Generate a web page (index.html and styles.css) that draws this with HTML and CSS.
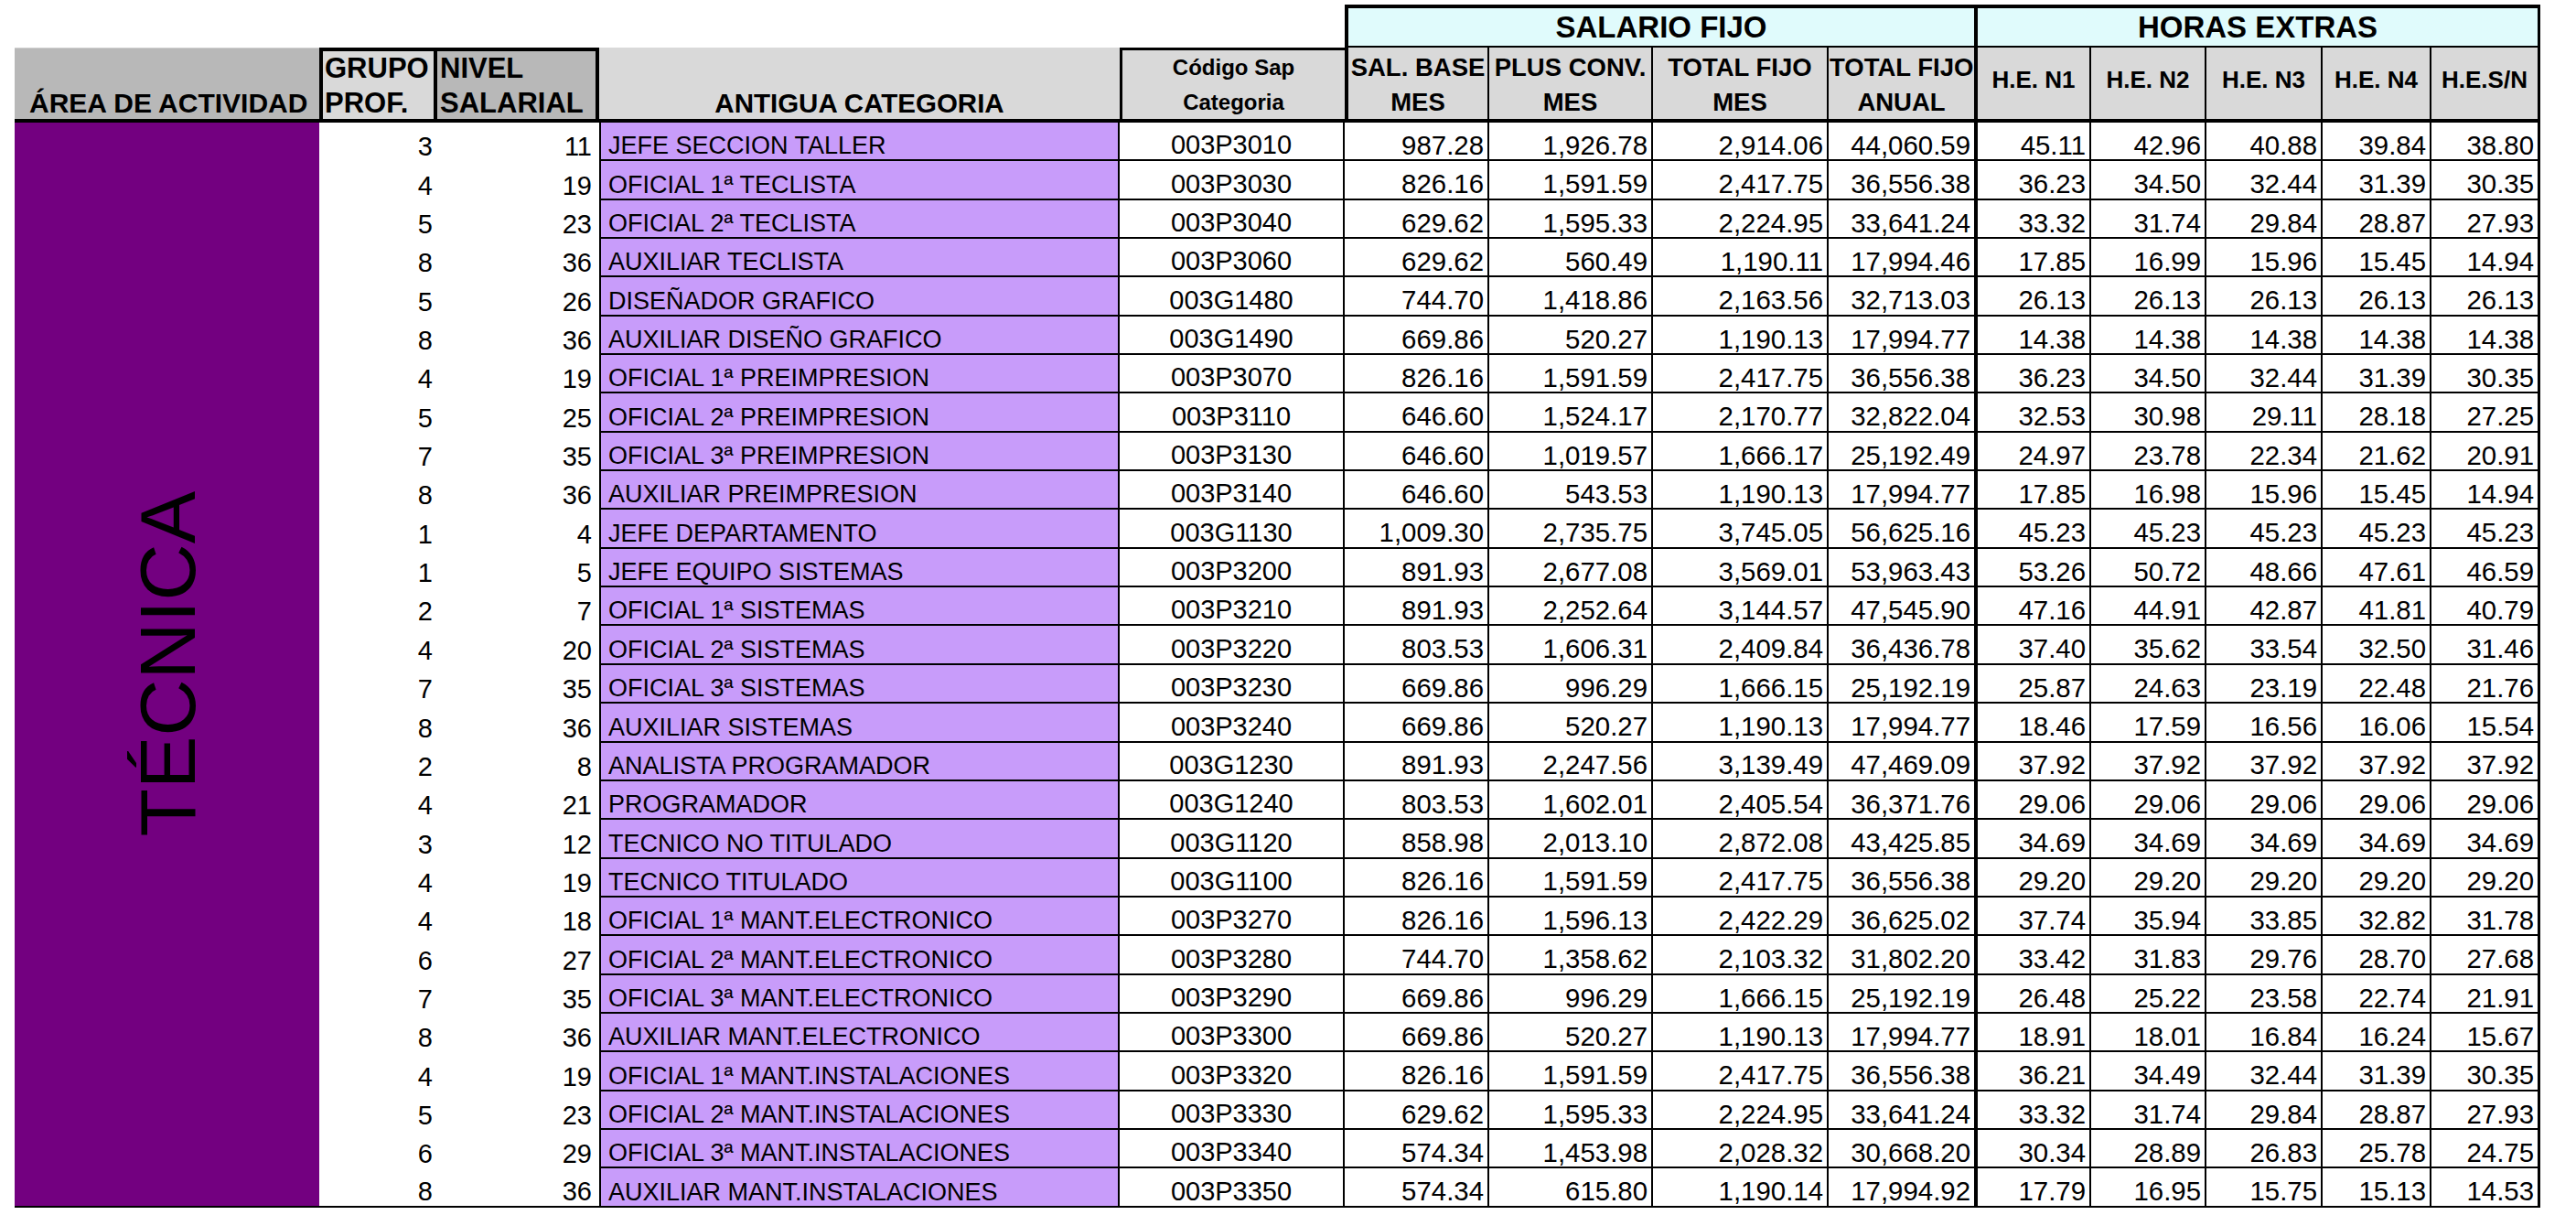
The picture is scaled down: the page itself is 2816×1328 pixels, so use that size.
FILE: index.html
```html
<!DOCTYPE html>
<html lang="es">
<head>
<meta charset="utf-8">
<title>Tabla salarial - Técnica</title>
<link rel="stylesheet" href="styles.css">
</head>
<body>
<div class="sheet">
  <div class="blank"></div>
  <div class="gt sal">SALARIO FIJO</div>
  <div class="gt hor">HORAS EXTRAS</div>

  <div class="h h-area">ÁREA DE ACTIVIDAD</div>
  <div class="h h-grp">GRUPO<br>PROF.</div>
  <div class="h h-niv">NIVEL<br>SALARIAL</div>
  <div class="h h-cat">ANTIGUA CATEGORIA</div>
  <div class="h h-code">Código Sap<br>Categoria</div>
  <div class="h h-m first"><span>SAL. BASE</span><span>MES</span></div>
  <div class="h h-m"><span>PLUS CONV.</span><span>MES</span></div>
  <div class="h h-m"><span>TOTAL FIJO</span><span>MES</span></div>
  <div class="h h-m an"><span class="wide">TOTAL FIJO</span><span>ANUAL</span></div>
  <div class="h h-he">H.E. N1</div>
  <div class="h h-he">H.E. N2</div>
  <div class="h h-he">H.E. N3</div>
  <div class="h h-he">H.E. N4</div>
  <div class="h h-he sn">H.E.S/N</div>

  <div class="area"><span>TÉCNICA</span></div>

  <div class="n">3</div><div class="n v">11</div><div class="cat">JEFE SECCION TALLER</div><div class="code">003P3010</div><div class="d">987.28</div><div class="d">1,926.78</div><div class="d">2,914.06</div><div class="d an">44,060.59</div><div class="d">45.11</div><div class="d">42.96</div><div class="d">40.88</div><div class="d">39.84</div><div class="d sn">38.80</div>
  <div class="n">4</div><div class="n v">19</div><div class="cat">OFICIAL 1ª TECLISTA</div><div class="code">003P3030</div><div class="d">826.16</div><div class="d">1,591.59</div><div class="d">2,417.75</div><div class="d an">36,556.38</div><div class="d">36.23</div><div class="d">34.50</div><div class="d">32.44</div><div class="d">31.39</div><div class="d sn">30.35</div>
  <div class="n">5</div><div class="n v">23</div><div class="cat">OFICIAL 2ª TECLISTA</div><div class="code">003P3040</div><div class="d">629.62</div><div class="d">1,595.33</div><div class="d">2,224.95</div><div class="d an">33,641.24</div><div class="d">33.32</div><div class="d">31.74</div><div class="d">29.84</div><div class="d">28.87</div><div class="d sn">27.93</div>
  <div class="n">8</div><div class="n v">36</div><div class="cat">AUXILIAR TECLISTA</div><div class="code">003P3060</div><div class="d">629.62</div><div class="d">560.49</div><div class="d">1,190.11</div><div class="d an">17,994.46</div><div class="d">17.85</div><div class="d">16.99</div><div class="d">15.96</div><div class="d">15.45</div><div class="d sn">14.94</div>
  <div class="n">5</div><div class="n v">26</div><div class="cat">DISEÑADOR GRAFICO</div><div class="code">003G1480</div><div class="d">744.70</div><div class="d">1,418.86</div><div class="d">2,163.56</div><div class="d an">32,713.03</div><div class="d">26.13</div><div class="d">26.13</div><div class="d">26.13</div><div class="d">26.13</div><div class="d sn">26.13</div>
  <div class="n">8</div><div class="n v">36</div><div class="cat">AUXILIAR DISEÑO GRAFICO</div><div class="code">003G1490</div><div class="d">669.86</div><div class="d">520.27</div><div class="d">1,190.13</div><div class="d an">17,994.77</div><div class="d">14.38</div><div class="d">14.38</div><div class="d">14.38</div><div class="d">14.38</div><div class="d sn">14.38</div>
  <div class="n">4</div><div class="n v">19</div><div class="cat">OFICIAL 1ª PREIMPRESION</div><div class="code">003P3070</div><div class="d">826.16</div><div class="d">1,591.59</div><div class="d">2,417.75</div><div class="d an">36,556.38</div><div class="d">36.23</div><div class="d">34.50</div><div class="d">32.44</div><div class="d">31.39</div><div class="d sn">30.35</div>
  <div class="n">5</div><div class="n v">25</div><div class="cat">OFICIAL 2ª PREIMPRESION</div><div class="code">003P3110</div><div class="d">646.60</div><div class="d">1,524.17</div><div class="d">2,170.77</div><div class="d an">32,822.04</div><div class="d">32.53</div><div class="d">30.98</div><div class="d">29.11</div><div class="d">28.18</div><div class="d sn">27.25</div>
  <div class="n">7</div><div class="n v">35</div><div class="cat">OFICIAL 3ª PREIMPRESION</div><div class="code">003P3130</div><div class="d">646.60</div><div class="d">1,019.57</div><div class="d">1,666.17</div><div class="d an">25,192.49</div><div class="d">24.97</div><div class="d">23.78</div><div class="d">22.34</div><div class="d">21.62</div><div class="d sn">20.91</div>
  <div class="n">8</div><div class="n v">36</div><div class="cat">AUXILIAR PREIMPRESION</div><div class="code">003P3140</div><div class="d">646.60</div><div class="d">543.53</div><div class="d">1,190.13</div><div class="d an">17,994.77</div><div class="d">17.85</div><div class="d">16.98</div><div class="d">15.96</div><div class="d">15.45</div><div class="d sn">14.94</div>
  <div class="n">1</div><div class="n v">4</div><div class="cat">JEFE DEPARTAMENTO</div><div class="code">003G1130</div><div class="d">1,009.30</div><div class="d">2,735.75</div><div class="d">3,745.05</div><div class="d an">56,625.16</div><div class="d">45.23</div><div class="d">45.23</div><div class="d">45.23</div><div class="d">45.23</div><div class="d sn">45.23</div>
  <div class="n">1</div><div class="n v">5</div><div class="cat">JEFE EQUIPO SISTEMAS</div><div class="code">003P3200</div><div class="d">891.93</div><div class="d">2,677.08</div><div class="d">3,569.01</div><div class="d an">53,963.43</div><div class="d">53.26</div><div class="d">50.72</div><div class="d">48.66</div><div class="d">47.61</div><div class="d sn">46.59</div>
  <div class="n">2</div><div class="n v">7</div><div class="cat">OFICIAL 1ª SISTEMAS</div><div class="code">003P3210</div><div class="d">891.93</div><div class="d">2,252.64</div><div class="d">3,144.57</div><div class="d an">47,545.90</div><div class="d">47.16</div><div class="d">44.91</div><div class="d">42.87</div><div class="d">41.81</div><div class="d sn">40.79</div>
  <div class="n">4</div><div class="n v">20</div><div class="cat">OFICIAL 2ª SISTEMAS</div><div class="code">003P3220</div><div class="d">803.53</div><div class="d">1,606.31</div><div class="d">2,409.84</div><div class="d an">36,436.78</div><div class="d">37.40</div><div class="d">35.62</div><div class="d">33.54</div><div class="d">32.50</div><div class="d sn">31.46</div>
  <div class="n">7</div><div class="n v">35</div><div class="cat">OFICIAL 3ª SISTEMAS</div><div class="code">003P3230</div><div class="d">669.86</div><div class="d">996.29</div><div class="d">1,666.15</div><div class="d an">25,192.19</div><div class="d">25.87</div><div class="d">24.63</div><div class="d">23.19</div><div class="d">22.48</div><div class="d sn">21.76</div>
  <div class="n">8</div><div class="n v">36</div><div class="cat">AUXILIAR SISTEMAS</div><div class="code">003P3240</div><div class="d">669.86</div><div class="d">520.27</div><div class="d">1,190.13</div><div class="d an">17,994.77</div><div class="d">18.46</div><div class="d">17.59</div><div class="d">16.56</div><div class="d">16.06</div><div class="d sn">15.54</div>
  <div class="n">2</div><div class="n v">8</div><div class="cat">ANALISTA PROGRAMADOR</div><div class="code">003G1230</div><div class="d">891.93</div><div class="d">2,247.56</div><div class="d">3,139.49</div><div class="d an">47,469.09</div><div class="d">37.92</div><div class="d">37.92</div><div class="d">37.92</div><div class="d">37.92</div><div class="d sn">37.92</div>
  <div class="n">4</div><div class="n v">21</div><div class="cat">PROGRAMADOR</div><div class="code">003G1240</div><div class="d">803.53</div><div class="d">1,602.01</div><div class="d">2,405.54</div><div class="d an">36,371.76</div><div class="d">29.06</div><div class="d">29.06</div><div class="d">29.06</div><div class="d">29.06</div><div class="d sn">29.06</div>
  <div class="n">3</div><div class="n v">12</div><div class="cat">TECNICO NO TITULADO</div><div class="code">003G1120</div><div class="d">858.98</div><div class="d">2,013.10</div><div class="d">2,872.08</div><div class="d an">43,425.85</div><div class="d">34.69</div><div class="d">34.69</div><div class="d">34.69</div><div class="d">34.69</div><div class="d sn">34.69</div>
  <div class="n">4</div><div class="n v">19</div><div class="cat">TECNICO TITULADO</div><div class="code">003G1100</div><div class="d">826.16</div><div class="d">1,591.59</div><div class="d">2,417.75</div><div class="d an">36,556.38</div><div class="d">29.20</div><div class="d">29.20</div><div class="d">29.20</div><div class="d">29.20</div><div class="d sn">29.20</div>
  <div class="n">4</div><div class="n v">18</div><div class="cat">OFICIAL 1ª MANT.ELECTRONICO</div><div class="code">003P3270</div><div class="d">826.16</div><div class="d">1,596.13</div><div class="d">2,422.29</div><div class="d an">36,625.02</div><div class="d">37.74</div><div class="d">35.94</div><div class="d">33.85</div><div class="d">32.82</div><div class="d sn">31.78</div>
  <div class="n">6</div><div class="n v">27</div><div class="cat">OFICIAL 2ª MANT.ELECTRONICO</div><div class="code">003P3280</div><div class="d">744.70</div><div class="d">1,358.62</div><div class="d">2,103.32</div><div class="d an">31,802.20</div><div class="d">33.42</div><div class="d">31.83</div><div class="d">29.76</div><div class="d">28.70</div><div class="d sn">27.68</div>
  <div class="n">7</div><div class="n v">35</div><div class="cat">OFICIAL 3ª MANT.ELECTRONICO</div><div class="code">003P3290</div><div class="d">669.86</div><div class="d">996.29</div><div class="d">1,666.15</div><div class="d an">25,192.19</div><div class="d">26.48</div><div class="d">25.22</div><div class="d">23.58</div><div class="d">22.74</div><div class="d sn">21.91</div>
  <div class="n">8</div><div class="n v">36</div><div class="cat">AUXILIAR MANT.ELECTRONICO</div><div class="code">003P3300</div><div class="d">669.86</div><div class="d">520.27</div><div class="d">1,190.13</div><div class="d an">17,994.77</div><div class="d">18.91</div><div class="d">18.01</div><div class="d">16.84</div><div class="d">16.24</div><div class="d sn">15.67</div>
  <div class="n">4</div><div class="n v">19</div><div class="cat">OFICIAL 1ª MANT.INSTALACIONES</div><div class="code">003P3320</div><div class="d">826.16</div><div class="d">1,591.59</div><div class="d">2,417.75</div><div class="d an">36,556.38</div><div class="d">36.21</div><div class="d">34.49</div><div class="d">32.44</div><div class="d">31.39</div><div class="d sn">30.35</div>
  <div class="n">5</div><div class="n v">23</div><div class="cat">OFICIAL 2ª MANT.INSTALACIONES</div><div class="code">003P3330</div><div class="d">629.62</div><div class="d">1,595.33</div><div class="d">2,224.95</div><div class="d an">33,641.24</div><div class="d">33.32</div><div class="d">31.74</div><div class="d">29.84</div><div class="d">28.87</div><div class="d sn">27.93</div>
  <div class="n">6</div><div class="n v">29</div><div class="cat">OFICIAL 3ª MANT.INSTALACIONES</div><div class="code">003P3340</div><div class="d">574.34</div><div class="d">1,453.98</div><div class="d">2,028.32</div><div class="d an">30,668.20</div><div class="d">30.34</div><div class="d">28.89</div><div class="d">26.83</div><div class="d">25.78</div><div class="d sn">24.75</div>
  <div class="n last">8</div><div class="n v last">36</div><div class="cat">AUXILIAR MANT.INSTALACIONES</div><div class="code">003P3350</div><div class="d">574.34</div><div class="d">615.80</div><div class="d">1,190.14</div><div class="d an">17,994.92</div><div class="d">17.79</div><div class="d">16.95</div><div class="d">15.75</div><div class="d">15.13</div><div class="d sn">14.53</div>
</div>
</body>
</html>
```

FILE: styles.css
```css
* { box-sizing: border-box; }

body {
  margin: 0;
  background: #fff;
  color: #000;
  font-family: "Liberation Sans", Arial, sans-serif;
}

.sheet {
  display: grid;
  grid-template-columns: 333px 129px 177px 569px 246px 158px 179px 192px 163px 124px 126px 127px 119px 119px;
  grid-template-rows: 47px 82px repeat(28, 42.357px);
  width: 2761px;
  margin: 5px 0 0 16px;
}

.sheet > div {
  overflow: hidden;
  white-space: nowrap;
}

/* group titles */
.blank { grid-column: 1 / span 5; }

.gt {
  background: #e0fbfc;
  border-top: 4px solid #000;
  border-bottom: 2px solid #000;
  font-weight: bold;
  font-size: 33px;
  line-height: 41px;
  text-align: center;
}
.sal { grid-column: 6 / span 4; border-left: 4px solid #000; border-right: 4px solid #000; }
.hor { grid-column: 10 / span 5; border-right: 3px solid #000; }

/* column headers */
.h {
  font-weight: bold;
  background: #d9d9d9;
  border-bottom: 4px solid #000;
}
.h-area {
  background: #b8b8b8;
  border-top: 1px solid #cfcfcf;
  font-size: 30px;
  line-height: 30px;
  display: flex;
  align-items: flex-end;
  padding: 0 0 2px 16px;
}
.h-grp {
  border: 4px solid #000;
  font-size: 31px;
  line-height: 38px;
  padding-left: 2px;
}
.h-niv {
  background: #b8b8b8;
  border-top: 4px solid #000;
  border-right: 4px solid #000;
  font-size: 31px;
  line-height: 38px;
  padding-left: 3px;
}
.h-cat {
  font-size: 29.5px;
  line-height: 30px;
  display: flex;
  align-items: flex-end;
  justify-content: center;
  padding-bottom: 2px;
}
.h-code {
  border-top: 3px solid #000;
  border-left: 3px solid #000;
  font-size: 24px;
  line-height: 38px;
  text-align: center;
}
.h-m {
  font-size: 27.5px;
  line-height: 30px;
  display: flex;
  flex-direction: column;
  justify-content: space-between;
  align-items: center;
  padding: 7px 0 3px;
  border-right: 2px solid #000;
}
.h-m.first { border-left: 4px solid #000; }
.h-m.an { border-right: 4px solid #000; }
.h-m .wide { align-self: flex-start; padding-left: 1px; }
.h-he {
  font-size: 26px;
  line-height: 30px;
  padding-top: 20px;
  text-align: center;
  border-right: 2px solid #000;
}
.h-he.sn { border-right: 3px solid #000; }

/* merged area cell */
.area {
  grid-column: 1;
  grid-row: 3 / span 28;
  background: #730080;
  border-bottom: 2px solid #000;
  display: flex;
  align-items: center;
  justify-content: center;
}
.area span {
  writing-mode: vertical-rl;
  transform: rotate(180deg);
  font-size: 86px;
  line-height: 1;
}

/* data cells */
.n, .cat, .code, .d {
  display: flex;
  align-items: flex-end;
  line-height: 1;
  padding-bottom: 1px;
}
.n {
  justify-content: flex-end;
  font-size: 29px;
  padding-right: 5px;
}
.n.v { padding-right: 8px; }
.last { border-bottom: 2px solid #000; }

.cat {
  background: #c89cfa;
  border-left: 2px solid #000;
  border-right: 2px solid #000;
  border-bottom: 2px solid #000;
  font-size: 27px;
  padding-left: 8px;
}
.code {
  justify-content: center;
  border-right: 2px solid #000;
  border-bottom: 2px solid #000;
  font-size: 29px;
}
.d {
  justify-content: flex-end;
  border-right: 2px solid #000;
  border-bottom: 2px solid #000;
  font-size: 29.4px;
  padding-right: 4px;
}
.d.an { border-right-width: 4px; }
.d.sn { border-right-width: 3px; }
```
